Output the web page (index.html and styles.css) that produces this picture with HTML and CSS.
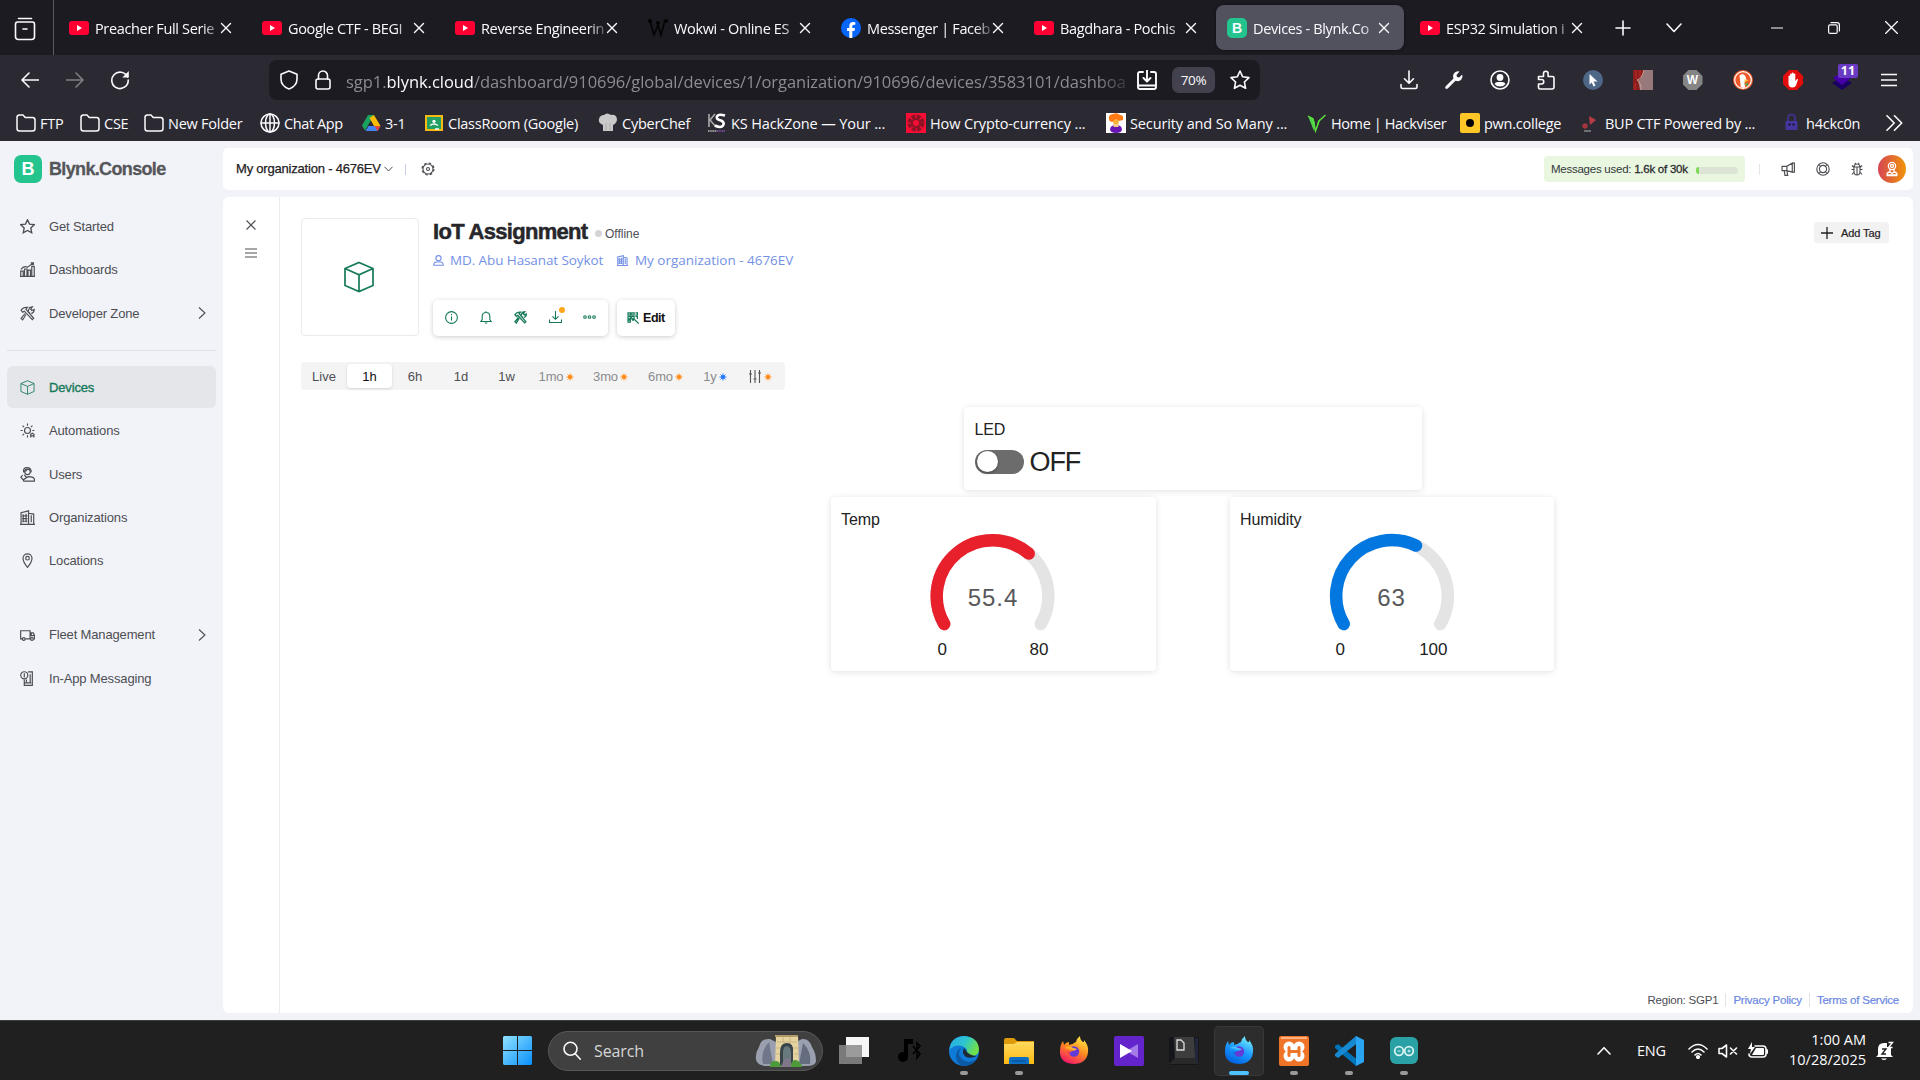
FILE: index.html
```html
<!DOCTYPE html>
<html lang="en">
<head>
<meta charset="utf-8">
<title>Devices - Blynk.Console</title>
<link rel="stylesheet" href="styles.css">
</head>
<body>
<svg class="defs" aria-hidden="true">
  <defs>
    <linearGradient id="gWin" x1="0" y1="0" x2="1" y2="1"><stop offset="0" stop-color="#8fe3ff"/><stop offset="1" stop-color="#0a8ffb"/></linearGradient>
    <linearGradient id="gEdge" x1="0" y1="0" x2="1" y2=".4"><stop offset="0" stop-color="#2aa8e8"/><stop offset=".55" stop-color="#2cc6d0"/><stop offset="1" stop-color="#6fe04b"/></linearGradient>
    <linearGradient id="gFox" x1=".8" y1="0" x2=".3" y2="1"><stop offset="0" stop-color="#fff04a"/><stop offset=".5" stop-color="#ff8a1e"/><stop offset="1" stop-color="#f5156c"/></linearGradient>
    <linearGradient id="gFoxDev" x1=".8" y1="0" x2=".3" y2="1"><stop offset="0" stop-color="#7df3ff"/><stop offset=".5" stop-color="#1e9dff"/><stop offset="1" stop-color="#0060df"/></linearGradient>
    <linearGradient id="gFolder" x1="0" y1="0" x2="0" y2="1"><stop offset="0" stop-color="#ffd95e"/><stop offset="1" stop-color="#fdb913"/></linearGradient>
    <linearGradient id="gAvatar" x1="0" y1="0" x2="1" y2="0"><stop offset="0" stop-color="#d64554"/><stop offset="1" stop-color="#f09408"/></linearGradient>
  </defs>
  <symbol id="youtube" viewBox="0 0 20 14"><rect width="20" height="14" rx="3" fill="#ff0033"/><path d="M8 4l5 3-5 3z" fill="#fff"/></symbol>
  <symbol id="x" viewBox="0 0 12 12"><path d="M1.500 1.500l9 9M10.500 1.500l-9 9"/></symbol>
  <symbol id="folder" viewBox="0 0 20 18"><path d="M1 3.500Q1 1 3.500 1H7l2.200 2.500H16.500Q19 3.500 19 6v8.500Q19 17 16.500 17h-13Q1 17 1 14.500z"/></symbol>
  <symbol id="cube" viewBox="0 0 30 32"><path d="M15 1.500L29 7.500V24.500L15 30.500L1 24.500V7.500zM1 7.500l14 6.200 14-6.200M15 13.700v16.800"/></symbol>
  <symbol id="building" viewBox="0 0 14 14"><path d="M1 13.300V2.500L8 .8v12.500M8 3l4.800.8v9.500M0 13.400h14M3 4v7.500M5.700 3.500v8M10.500 5v6.500M2 5.500h5M2 8h5M2 10.500h5"/></symbol>
  <symbol id="tools" viewBox="0 0 14 14"><path d="M1 4Q3 .8 7 1.200L5.500 3 12.800 11.500 11.500 12.800 4 4.800 2.500 5.800zM9.300 6.800L7.500 5 9 1.500 11.500.8 10 3l1 1.200 2.200-1Q13.500 6 10.500 7M5.500 8L2.500 13 1 11.600 4.700 7"/></symbol>
  <symbol id="star" viewBox="0 0 20 20"><path d="M10 1l2.700 5.800 6.300.8-4.600 4.400 1.200 6.300L10 15.200l-5.600 3.100 1.200-6.300L1 7.600l6.300-.8z"/></symbol>
  <symbol id="chev" viewBox="0 0 8 12"><path d="M1 .5L7 6l-6 5.500"/></symbol>
  <symbol id="dl" viewBox="0 0 18 20"><path d="M9 1v12M4.500 8.800L9 13.300l4.500-4.500M1 14.500V17q0 1.500 1.500 1.500h13Q17 18.500 17 17v-2.500"/></symbol>
  <symbol id="fox" viewBox="0 0 30 30"><path d="M1 15Q1 9 4 5l1 4Q7 6 10 6l0 3q2-1 4-1 0-1 3-2 1-4 4-6 0 4 3 6l1 0 0-2q5 6 4 12-1 11-13 12Q2 28 1 17z"/><circle cx="15" cy="15.500" r="5.200" fill="#633bd6"/><path d="M6 11q5-1 8 1l4 1q-2 2-5 2-2 1-3 3-3-3-4-7z"/></symbol>
  <symbol id="spark" viewBox="0 0 8 8"><circle cx="4" cy="4" r="2"/><path d="M4 .4v7.200M.4 4h7.200M1.500 1.500l5 5M6.500 1.500l-5 5" stroke="currentColor" stroke-width=".9"/></symbol>
</svg>

<div class="screen">
  <header class="tabstrip">
    <div class="firefox-view"><svg class="ln" width="22" height="24" viewBox="0 0 22 24"><path d="M4.500 1.500h13M3.500 5h15Q20.500 5 20.500 7.500v12q0 3-3 3h-13q-3 0-3-3v-12Q1.500 5 3.500 5zM9 12h4"/></svg></div>
    <nav class="tabs">
      <div class="tab"><svg class="fav yt"><use href="#youtube"/></svg><span>Preacher Full Serie</span><svg class="ln close"><use href="#x"/></svg></div>
      <div class="tab"><svg class="fav yt"><use href="#youtube"/></svg><span>Google CTF - BEGI</span><svg class="ln close"><use href="#x"/></svg></div>
      <div class="tab"><svg class="fav yt"><use href="#youtube"/></svg><span>Reverse Engineerin</span><svg class="ln close"><use href="#x"/></svg></div>
      <div class="tab"><svg class="fav" viewBox="0 0 20 20" fill="none" stroke="#050505" stroke-width="1.800"><path d="M2 3l4 14L10 7l3 10L17 2"/><circle cx="2" cy="3" r="1.200"/><circle cx="18" cy="3" r="1.200"/><circle cx="10" cy="5" r="1.200"/></svg><span>Wokwi - Online ES</span><svg class="ln close"><use href="#x"/></svg></div>
      <div class="tab"><svg class="fav" viewBox="0 0 20 20"><circle cx="10" cy="10" r="10" fill="#0866ff"/><path d="M8.300 20v-7H6v-3h2.300V8q0-4 4-4l2 .2v2.600h-1.400Q11.300 6.800 11.300 8.300V10H14l-.5 3h-2.200v7z" fill="#fff"/></svg><span>Messenger | Faceb</span><svg class="ln close"><use href="#x"/></svg></div>
      <div class="tab"><svg class="fav yt"><use href="#youtube"/></svg><span>Bagdhara - Pochis</span><svg class="ln close"><use href="#x"/></svg></div>
      <div class="tab active"><b class="fav bl">B</b><span>Devices - Blynk.Co</span><svg class="ln close"><use href="#x"/></svg></div>
      <div class="tab"><svg class="fav yt"><use href="#youtube"/></svg><span>ESP32 Simulation i</span><svg class="ln close"><use href="#x"/></svg></div>
    </nav>
    <div class="strip-buttons">
      <svg class="ln" viewBox="0 0 16 16" width="16" height="16"><path d="M8 1v14M1 8h14"/></svg>
      <svg class="ln" viewBox="0 0 16 10" width="16" height="10"><path d="M1 1l7 7.500L15 1"/></svg>
    </div>
    <div class="window-buttons">
      <svg class="ln" viewBox="0 0 12 12" width="12" height="12"><path d="M0 6h12"/></svg>
      <svg class="ln" viewBox="0 0 12 12" width="12" height="12"><rect x=".6" y="2.800" width="8.600" height="8.600" rx="1.500"/><path d="M3 .7h6Q11.400.7 11.400 3v6"/></svg>
      <svg class="ln" viewBox="0 0 12 12" width="13" height="13"><path d="M.5.5l11 11M11.500.5l-11 11"/></svg>
    </div>
  </header>

  <div class="navbar">
    <div class="nav-buttons">
      <svg class="ln" viewBox="0 0 18 16" width="18" height="16"><path d="M17.500 8H1.200M8 1L1 8l7 7"/></svg>
      <svg class="ln dim" viewBox="0 0 18 16" width="18" height="16"><path d="M.5 8h16.300M10 1l7 7-7 7"/></svg>
      <svg class="ln" viewBox="0 0 20 20" width="20" height="20"><path d="M17.500 7A8.200 8.200 0 1 0 18.200 10"/><path d="M18.800 1v6.500h-6.500z" fill="#fbfbfe" stroke="none"/></svg>
    </div>
    <div class="urlbar">
      <svg class="ln shield" viewBox="0 0 18 20" width="18" height="20"><path d="M9 1l8 3.200V9q0 7-8 10Q1 16 1 9V4.200z"/></svg>
      <svg class="ln lock" viewBox="0 0 16 20" width="16" height="20"><rect x="1" y="9" width="14" height="10" rx="2"/><path d="M3.500 9V5.500a4.500 4.500 0 0 1 9 0V9"/></svg>
      <div class="url">sgp1.<em>blynk.cloud</em>/dashboard/910696/global/devices/1/organization/910696/devices/3583101/dashboa</div>
      <svg class="ln" viewBox="0 0 20 20" width="20" height="20"><path d="M6 2H3Q1 2 1 4v13q0 2 2 2h14q2 0 2-2V4q0-2-2-2h-3M1 15.500h18M10 0v11M6.500 8L10 11.500 13.500 8" stroke-width="1.900"/></svg>
      <span class="zoom">70%</span>
      <svg class="ln" width="20" height="20"><use href="#star"/></svg>
    </div>
    <div class="extensions">
      <svg class="ln" width="18" height="20"><use href="#dl"/></svg>
      <svg viewBox="0 0 20 20" width="20" height="20" fill="#fbfbfe"><path d="M1.500 16.500l8-8Q8 4 11.500 2q2-1.200 4-.5L12.500 5l.5 2 2.200.5 3-3q1 3-1 5.200Q15 12 11.500 10.700l-8 8q-3.200.5-2-2.200z"/></svg>
      <svg class="ln" viewBox="0 0 20 20" width="20" height="20"><circle cx="10" cy="10" r="9"/><circle cx="10" cy="7.500" r="3.400" fill="#fbfbfe" stroke="none"/><path d="M4.500 14q1-2 3-2h5q2 0 3 2-2 2.600-5.500 2.600T4.500 14z" fill="#fbfbfe" stroke="none"/></svg>
      <svg class="ln" viewBox="0 0 18 20" width="18" height="20"><path d="M1.500 6.500h5V3.500a2.300 2.300 0 0 1 4.600 0v3h4.400q1.500 0 1.500 1.500v9q0 2-2 2H3q-1.500 0-1.500-2v-3h3a2.200 2.200 0 0 0 0-4.500h-3z"/></svg>
      <svg viewBox="0 0 20 20" width="20" height="20"><circle cx="10" cy="10" r="10" fill="#4f6787"/><path d="M6.500 4l8 7.500h-4l2 4-2 .9-1.700-4-2.300 2z" fill="#fff"/></svg>
      <svg viewBox="0 0 20 20" width="20" height="20"><path fill="#97797b" d="M0 0h20v20H0z"/><path d="M0 0h11Q9 8 5 11l2 9H0z" fill="#8b1d1d"/><path d="M3 0v9M7 0v7M2 13v7" stroke="#b32626" stroke-width="1.500"/><path d="M4 10q4 2 4 10M11 0Q9 9 4 10" stroke="#c9a093" fill="none"/></svg>
      <b class="ext octagon grey">W</b>
      <svg viewBox="0 0 20 20" width="20" height="20"><circle cx="10" cy="10" r="10" fill="#ee5a2b"/><circle cx="10" cy="10" r="8.300" fill="none" stroke="#fff" stroke-width="1.200"/><path d="M6.500 5.500q4-3.500 6 1l1 3.500-2 2 .5 5.500Q9 18 7.800 17z" fill="#fff"/><path d="M11 9.500l5 .5-4 2z" fill="#fdc63a"/><path d="M11 14l4-1v3z" fill="#3db44a"/></svg>
      <svg viewBox="0 0 20 20" width="20" height="20"><path d="M6 0h8l6 6v8l-6 6H6l-6-6V6z" fill="#e40d0d"/><path d="M5.500 11V6q.8-1 1.600 0V4q.8-1 1.700 0V3q.9-1 1.800 0v1q.9-1 1.700 0v7l1.700-2q1.200-.4 1 .6L13 15.500q-1 2-3.500 2-4 0-4-4z" fill="#fff"/></svg>
      <div class="ublock"><svg viewBox="0 0 20 20" width="20" height="20"><path d="M10 7l10 6-10 7-10-7z" fill="#1b0064"/><path d="M10 2l9 6-9 7-9-7z" fill="#4500a8"/></svg><b class="count">11</b></div>
      <svg class="ln" viewBox="0 0 16 14" width="16" height="14"><path d="M.5 1.500h15M.5 7h15M.5 12.500h15"/></svg>
    </div>
  </div>

  <div class="bookmarks">
    <a><svg class="ln"><use href="#folder"/></svg>FTP</a>
    <a><svg class="ln"><use href="#folder"/></svg>CSE</a>
    <a><svg class="ln"><use href="#folder"/></svg>New Folder</a>
    <a><svg class="ln" viewBox="0 0 20 20"><circle cx="10" cy="10" r="9"/><ellipse cx="10" cy="10" rx="4.500" ry="9"/><path d="M1 10h18M10 1v18"/></svg>Chat App</a>
    <a><svg viewBox="0 0 20 18"><path d="M7 1h6l-3.500 6L4 16.500 1 11.500z" fill="#1aa260"/><path d="M13 1l6.500 11H13L8.500 4z" fill="#fbbc05"/><path d="M4.500 17l3-5h12l-3 5z" fill="#4285f4"/><path d="M13.500 12h6l-3 5z" fill="#ea4335"/></svg>3-1</a>
    <a><svg viewBox="0 0 20 18"><path fill="#f5ba14" d="M1 1h18v16H1z"/><path fill="#23a164" d="M3 3h14v12H3z"/><circle cx="10" cy="7.300" r="1.600" fill="#fff"/><path d="M6 11.500q4-3 8 0M11 15h4" stroke="#fff" stroke-width="1.300" fill="none"/></svg>ClassRoom (Google)</a>
    <a><svg viewBox="0 0 20 20"><path d="M5 18v-6Q0 10 1 6q1-4 5-4 3-3 7 0 5-1 6 4 0 4-4 6v6z" fill="#c9c9c9"/><path d="M8 10v7M12 10v7" stroke="#aaa"/></svg>CyberChef</a>
    <a><svg viewBox="0 0 20 20"><path d="M2 1v13M8 1L3 7l6 7" stroke="#aaa" stroke-width="1.600" fill="none"/><path d="M18 2.500q-7-2-8 1t4 4q4 2 2 5t-8 0" stroke="#fff" stroke-width="2.600" fill="none"/><path d="M1 18h9" stroke="#999" stroke-width="2" stroke-dasharray="1.500 .7"/><path d="M10 18h8" stroke="#6e4a8e" stroke-width="2" stroke-dasharray="1.500 .7"/></svg>KS HackZone — Your ...</a>
    <a><svg viewBox="0 0 20 20"><path fill="#f80d35" d="M0 0h20v20H0z"/><circle cx="10" cy="10" r="6.500" fill="none" stroke="#8b1424" stroke-width="4" stroke-dasharray="3.800 1.300"/><circle cx="10" cy="10" r="4" fill="none" stroke="#8b1424" stroke-width="2"/></svg>How Crypto-currency ...</a>
    <a><svg viewBox="0 0 20 20"><path fill="#fff" d="M0 0h20v20H0z"/><path d="M4 17q0-5 6-5t6 5q-1 3-6 3t-6-3z" fill="#6a16b5"/><path d="M7.500 6h5v8h-5z" fill="#f9ca8a"/><path d="M3 6q-1-4 4-5 4-2 7 1 4 0 3 5l-4 1-3-2-3 3q-4 0-4-3z" fill="#ff7a12"/><path d="M7.500 7h5v4h-5z" fill="#f9b13b"/></svg>Security and So Many ...</a>
    <a><svg viewBox="0 0 20 18"><path d="M1 2l5 2 2 5-1 8zM19 1l-6 5-4 11 2-10z" fill="#4bd64b"/><path d="M1 2l5 3 2.500 12L12 7l6.500-6" stroke="#5de03c" stroke-width="1.400" fill="none"/></svg>Home | Hackviser</a>
    <a><svg viewBox="0 0 20 20"><rect width="20" height="20" rx="2" fill="#ffc627"/><circle cx="10" cy="10" r="4" fill="#000"/></svg>pwn.college</a>
    <a><svg viewBox="0 0 20 20"><path d="M8 3l7 4-6 5z" fill="#b93b45"/><circle cx="4" cy="13" r="2.700" fill="#a5343d"/><path d="M3 18h7" stroke="#888" stroke-width="1.500"/></svg>BUP CTF Powered by ...</a>
    <a><svg viewBox="0 0 20 20"><path d="M6 9V5q0-3.500 3.500-3.500T13 5v4" stroke="#3f3393" stroke-width="1.700" fill="none"/><rect x="3.500" y="8" width="12" height="9" rx="1" fill="#44369e"/><path d="M6.500 11.500h2M10.500 11.500h2" stroke="#15122e" stroke-width="2"/></svg>h4ckc0n</a>
    <svg class="ln more" viewBox="0 0 17 16"><path d="M1 .8L8.200 8 1 15.200M8.500.8L15.700 8l-7.200 7.200"/></svg>
  </div>

  <div class="page">
    <aside class="sidebar">
      <div class="brand"><b class="logo">B</b><strong>Blynk.Console</strong></div>
      <nav class="menu">
        <a><svg class="ic"><use href="#star"/></svg>Get Started</a>
        <a><svg class="ic" viewBox="0 0 14 14"><path d="M.7 13.300V8.500H3v4.800M4.200 13.300V6.500h2.300v6.800M7.500 13.300V7.500h2.300v5.800M11 13.300V4h2.300v9.300M0 13.400h14M.8 7q3-4 6-2l5.500-4M10 .8h2.500v2"/></svg>Dashboards</a>
        <a><svg class="ic"><use href="#tools"/></svg>Developer Zone<svg class="ic arrow"><use href="#chev"/></svg></a>
      </nav>
      <nav class="menu main-menu">
        <a class="selected"><svg class="ic"><use href="#cube"/></svg>Devices</a>
        <a><svg class="ic" viewBox="0 0 14 14"><circle cx="7" cy="7" r="2.800"/><path d="M7 .5v2M7 11.500v2M.5 7h2M11.500 7h2M2.400 2.400l1.400 1.400M11.600 2.400l-1.400 1.400M2.400 11.600l1.400-1.400M10 13.500v-3l1.500-1 1.500 1v3M10 12h3"/></svg>Automations</a>
        <a><svg class="ic" viewBox="0 0 14 14"><circle cx="7" cy="4.500" r="2.600"/><path d="M3.500 5Q2.500.6 6.500.6t4 4.400M4 4q2 0 3-2M2.500 7.500l-1.700 2L3 12l3-2 2-1q5.500 0 5.500 3.200v1H3.500L3 12M4 7.500L6.500 10"/></svg>Users</a>
        <a><svg class="ic"><use href="#building"/></svg>Organizations</a>
        <a><svg class="ic" viewBox="0 0 14 14"><path d="M7 13.500Q2.800 8.500 2.800 5a4.200 4.200 0 0 1 8.400 0q0 3.500-4.200 8.500z"/><circle cx="7" cy="4.800" r="1.700"/></svg>Locations</a>
      </nav>
      <nav class="menu">
        <a><svg class="ic" viewBox="0 0 14 14"><path d="M2 11H.6V3.500h8.800V11H5M9.400 5.500h3l1.200 2.500v3h-1M9.400 11h.5M10.500 6v2h3"/><circle cx="3.500" cy="11.200" r="1.300"/><circle cx="11.200" cy="11.200" r="1.300"/></svg>Fleet Management<svg class="ic arrow"><use href="#chev"/></svg></a>
        <a><svg class="ic" viewBox="0 0 14 14"><path d="M4 8v5.400h7.500V.8H7.500M9.500 11V3M4.500 11h6"/><circle cx="4" cy="4" r="3.300"/><path d="M4 2v4M6 8v2.500"/></svg>In-App Messaging</a>
      </nav>
    </aside>

    <div class="workspace">
      <div class="topbar">
        <span class="org">My organization - 4676EV</span>
        <svg class="ic" viewBox="0 0 10 6" width="9" height="6"><path d="M.5.5L5 5.200 9.500.5"/></svg>
        <i class="sep blue"></i>
        <svg class="ic gear" viewBox="0 0 14 14" width="14" height="14"><circle cx="7" cy="7" r="5.900" stroke-dasharray="2.500 2.130" stroke-width="1.300"/><circle cx="7" cy="7" r="5"/><circle cx="7" cy="7" r="1.500"/></svg>
        <div class="usage"><span>Messages used: <b>1.6k of 30k</b></span><i class="meter"><i></i></i></div>
        <i class="sep"></i>
        <svg class="ic" viewBox="0 0 14 14" width="15" height="15"><path d="M10.500 1v8.500L5.500 8H1V4h4.500zM10.500 1h2v8.500h-2M5.500 4v4M3 8l.7 4.500h2.600L5.500 8"/></svg>
        <svg class="ic" viewBox="0 0 14 14" width="14" height="14"><circle cx="7" cy="7" r="6.200"/><circle cx="7" cy="7" r="3.600"/><path d="M3 2.500l2 2.300M11 2.500L9 4.800M3 11.500l2-2.300M11 11.500L9 9.200"/></svg>
        <svg class="ic bug" viewBox="0 0 14 14" width="14" height="14"><path d="M4 5q0-3 3-3t3 3v4.500Q10 13 7 13t-3-3.500zM4 5h6M7 5v8M4 7.500H1.500M10 7.500h2.500M4 5.500L2 3.500M10 5.500l2-2M4 10l-2 2.500M10 10l2 2.500M5.500 2L5 .7M8.500 2L9 .7"/></svg>
        <svg class="avatar" viewBox="0 0 28 28" width="28" height="28"><circle cx="14" cy="14" r="14" fill="url(#gAvatar)"/><g fill="none" stroke="#fff" stroke-width="1.300"><circle cx="14" cy="11" r="3.600"/><circle cx="14" cy="11" r="1.500"/><path d="M12 14v3M16 14v3M9 20q0-3 3-3l2 1.500 2-1.500q3 0 3 3zM9 20.500h10"/></g></svg>
      </div>

      <main class="panel">
        <div class="rail">
          <svg class="ic" width="12" height="12"><use href="#x"/></svg>
          <svg class="ic" viewBox="0 0 12 10" width="12" height="10"><path d="M0 1h12M0 5h12M0 9h12"/></svg>
        </div>
        <div class="device">
          <div class="device-head">
            <div class="thumb"><svg class="ic"><use href="#cube"/></svg></div>
            <div class="info">
              <div class="title"><h1>IoT Assignment</h1><i class="dot"></i><span>Offline</span></div>
              <div class="owners">
                <svg class="ic" viewBox="0 0 11 11" width="11" height="11"><circle cx="5.500" cy="3.200" r="2.600"/><path d="M.7 10.300Q.7 7 3.500 7h4q2.800 0 2.800 3.300z"/></svg><span class="owner">MD. Abu Hasanat Soykot</span>
                <svg class="ic office" width="11" height="11"><use href="#building"/></svg><span class="org-link">My organization - 4676EV</span>
              </div>
              <div class="actions">
                <div class="btns">
                  <span><svg class="ic" viewBox="0 0 13 13" width="13" height="13"><circle cx="6.500" cy="6.500" r="5.900"/><path d="M6.500 5.500v4M6.500 3v1.200"/></svg></span>
                  <span><svg class="ic" viewBox="0 0 12 13" width="12" height="13"><path d="M.8 10.500h10.400L9.800 8.500V5.500Q9.800 1.500 6 1.500T2.200 5.500v3zM4.700 12h2.600M6 .3v1"/></svg></span>
                  <span><svg class="ic heavy" width="13" height="13"><use href="#tools"/></svg></span>
                  <span class="badge"><svg class="ic" viewBox="0 0 13 12" width="13" height="12"><path d="M6.500 0v8M3.500 5.300l3 3 3-3M.5 8.500v3h12v-3"/></svg></span>
                  <span><svg class="ic" viewBox="0 0 13 4" width="13" height="4"><circle cx="2" cy="2" r="1.300"/><circle cx="6.500" cy="2" r="1.300"/><circle cx="11" cy="2" r="1.300"/></svg></span>
                </div>
                <div class="edit"><svg class="ic" viewBox="0 0 12 12" width="12" height="12"><path d="M1 .8h2.400v2.400H1zM4.700.8h2.400v2.400H4.700zM8.400.8h2v2.400h-2M1 4.500h2.400v2.400H1zM4.700 4.500h2.400v2.400H4.700zM1 8.200h2.400v2H1zM5 8.200h2M8.400 4.500h2v2.500M7 7l4.700 4.500" stroke-width="1.200"/></svg>Edit</div>
              </div>
            </div>
            <div class="addtag"><svg class="ic" viewBox="0 0 12 12" width="12" height="12"><path d="M6 0v12M0 6h12"/></svg>Add Tag</div>
          </div>
          <div class="ranges">
            <span>Live</span><span class="on">1h</span><span>6h</span><span>1d</span><span>1w</span>
            <span class="pro">1mo<svg><use href="#spark"/></svg></span><span class="pro">3mo<svg><use href="#spark"/></svg></span><span class="pro">6mo<svg><use href="#spark"/></svg></span><span class="pro plus">1y<svg><use href="#spark"/></svg></span>
            <span class="pro custom"><svg class="ic sliders" viewBox="0 0 12 13"><path d="M1.500 0v13M6 0v13M10.500 0v13M0 4h3M4.500 9h3M9 3h3" stroke="#555"/></svg><svg><use href="#spark"/></svg></span>
          </div>
          <div class="widgets">
            <section class="card led"><h2>LED</h2><div class="toggle"><i class="switch"></i><span>OFF</span></div></section>
            <section class="card"><h2>Temp</h2>
              <div class="gauge"><svg viewBox="0 0 126 102"><path class="track" d="M14.200 91A55.800 55.800 0 1 1 110.800 91"/><path class="temp" d="M14.200 91A55.800 55.800 0 0 1 98.700 20.600"/></svg><strong>55.4</strong><div class="limits"><span>0</span><span>80</span></div></div></section>
            <section class="card"><h2>Humidity</h2>
              <div class="gauge"><svg viewBox="0 0 126 102"><path class="track" d="M14.700 91A55.800 55.800 0 1 1 111.300 91"/><path class="hum" d="M14.700 91A55.800 55.800 0 0 1 87 12.600"/></svg><strong>63</strong><div class="limits wide"><span>0</span><span>100</span></div></div></section>
          </div>
          <footer class="legal"><span>Region: SGP1</span><a>Privacy Policy</a><a>Terms of Service</a></footer>
        </div>
      </main>
    </div>
  </div>

  <div class="taskbar">
    <svg class="start" viewBox="0 0 29 29" width="29" height="29" fill="url(#gWin)"><path d="M1 0h13v14H0V1zM15 0h13l1 1v13H15zM0 15h14v14H1l-1-1zM15 15h14v13l-1 1H15z"/></svg>
    <div class="search">
      <svg class="ln" viewBox="0 0 18 19" width="18" height="19"><circle cx="7.500" cy="7.800" r="6.500"/><path d="M12.500 13l4.800 5.200"/></svg><span>Search</span>
      <svg class="art" viewBox="0 0 62 34" width="62" height="34"><path d="M1 26Q0 19 4 13 6 4 15 5l6 3v24H12Q3 32 1 26z" fill="#9aa0af"/><path d="M8 30Q5 18 14 8l4 22z" fill="#71778a"/><path d="M61 27Q61 19 57 13 54 4 47 5l-6 3v24h10q10 0 10-5z" fill="#9aa0af"/><path d="M55 30Q57 18 48 9l-4 21z" fill="#646c7e"/><path d="M21 2h22l1 31H20z" fill="#e5d3a0"/><path d="M20 1h23v2H20z" fill="#b09a66"/><path d="M22 8h20M21 14h4M38 14h5M21 20h4M39 20h4M28 3v5M35 3v5" stroke="#c4ae78" stroke-width=".8"/><path d="M25 32V18q0-9 7-9t6 9v14z" fill="#39444b"/><path d="M28 32V19q0-7 4-7 4 1 4 7v13z" fill="#697a7c"/><path d="M26 33q3-10 8-9l4 9z" fill="#807789"/><path d="M15 33q0-7 5-6 5-1 6 6zM36 33q0-8 5-7 3 1 4 3 2 1 2 4z" fill="#4d9a3b"/></svg>
    </div>
    <div class="apps">
      <div><svg viewBox="0 0 30 30"><path d="M7 1h23v20H7z" fill="#f6f6f6"/><path d="M0 9h23v19H0z" fill="#8b8b8b" opacity=".85"/></svg></div>
      <div><svg viewBox="0 0 30 30" fill="#000"><circle cx="9" cy="21" r="5"/><path d="M10 21V3h9v5h-5v13z"/><path d="M19 10l7 8-3 4V7l3 3-7 8" fill="none" stroke="#000" stroke-width="1.600"/></svg></div>
      <div class="open"><svg viewBox="0 0 30 30"><circle cx="15" cy="15" r="15" fill="#0f7ad8"/><path d="M.5 14Q1 1 15 0q14 1 15 13 0 7-7 7-6 0-5-4 1-4-5-6Q5 8 .5 14z" fill="url(#gEdge)"/><path d="M12 12q-5 7 2 12 6 4 14-1-5 7-13 7Q8 29 7 21q0-7 5-9z" fill="#0c59a4"/><path d="M15 12q-3 5 2 9 5 2 11-1-6 0-10-4z" fill="#202a35"/></svg></div>
      <div class="open"><svg viewBox="0 0 30 30"><path d="M0 4q0-2 2-2h8l3 3h17v8H0z" fill="#dd9b0b"/><path d="M0 8h10l3-2h17v22H0z" fill="url(#gFolder)"/><path d="M5 28v-5q0-2 2-2h16q2 0 2 2v5z" fill="#0c6fc4"/><path d="M8 25h14" stroke="#074b8b"/></svg></div>
      <div><svg viewBox="0 0 30 30" fill="url(#gFox)"><use href="#fox"/></svg></div>
      <div><svg viewBox="0 0 30 30"><rect width="30" height="30" rx="2" fill="#6424cc"/><path d="M24 8v14L12 15z" fill="#a47be8"/><path d="M6 8l12 7-12 7z" fill="#fff"/></svg></div>
      <div><svg viewBox="0 0 30 30"><rect y="1" width="30" height="28" rx="2" fill="#15161c"/><path d="M5 1h20l1 21H6z" fill="#3d3d3e"/><path d="M0 28L6 22h20l4 6z" fill="#29292a"/><path d="M26 2h3v26l-3-6z" fill="#22263a"/><path d="M8 4h4l3 3v7H8z" fill="none" stroke="#ddd" stroke-width="1.300"/></svg></div>
      <div class="open current"><svg viewBox="0 0 30 30" fill="url(#gFoxDev)"><use href="#fox"/></svg></div>
      <div class="open"><svg viewBox="0 0 30 30"><rect width="30" height="30" rx="2" fill="#f07427"/><path d="M2 1h26v2H2z" fill="#fbb283"/><g fill="#fff"><circle cx="10" cy="11" r="5.500"/><circle cx="20" cy="11" r="5.500"/><circle cx="10" cy="20" r="5.500"/><circle cx="20" cy="20" r="5.500"/><path d="M8 11h14v9H8z"/></g><path d="M10 11.500v8M20 11.500v8M10 15.500h10" stroke="#f07427" stroke-width="3" stroke-linecap="round"/></svg></div>
      <div class="open"><svg viewBox="0 0 30 30"><path d="M1 10l3-2 21 17-3 5L1 12z" fill="#0072b8"/><path d="M1 20l3 2L25 6l-3-6L1 18z" fill="#1689d1"/><path d="M22 0l8 4v22l-8 4z" fill="#2aa5f2"/></svg></div>
      <div class="open"><svg viewBox="0 0 30 30"><rect x="1" y="1" width="28" height="27" rx="6" fill="#2aa1a5"/><g fill="none" stroke="#d8f1f1" stroke-width="1.800"><circle cx="10" cy="15" r="4.300"/><circle cx="20" cy="15" r="4.300"/><path d="M8.500 15h3M18.500 15h3M20 13.500v3" stroke-width="1"/></g></svg></div>
    </div>
    <div class="tray">
      <svg class="ln" viewBox="0 0 14 9" width="14" height="9"><path d="M1 8l6-6.300L13 8"/></svg>
      <span class="lang">ENG</span>
      <svg class="ln" viewBox="0 0 20 16" width="20" height="16"><path d="M1 6q9-9 18 0M4 9q6-6 12 0M7 12q3-3 6 0"/><circle cx="10" cy="14" r="1.300" fill="#fff"/></svg>
      <svg class="ln" viewBox="0 0 20 14" width="20" height="14"><path d="M1 4.500h3L8.500 1v12L4 9.500H1zM12.500 4l6 6M18.500 4l-6 6"/></svg>
      <svg class="ln" viewBox="0 0 20 17" width="20" height="17"><path d="M7 4h8q3 0 3 3v5q0 3-3 3H4q-3 0-3-3M19.300 8v3"/><path d="M8 6h7q1 0 1 1v5q0 1-1 1H4z" fill="#fff" stroke="none"/><path d="M4 0L0 7h3l-1 5 5-7H4z" fill="#fff" stroke="none"/></svg>
      <div class="clock"><span>1:00 AM</span><span>10/28/2025</span></div>
      <svg viewBox="0 0 18 20" width="18" height="20" fill="#fff"><path d="M0 16l2-2V8q0-6 6-6l3 0 0 4h4v8l2 2zM5 17.500h6q-3 3-6 0z"/><path d="M6 8h4l-4 5h4" stroke="#202020" stroke-width="1.400" fill="none"/><path d="M12.500 1.500h4l-4 5h4" stroke="#fff" stroke-width="1.400" fill="none"/></svg>
    </div>
  </div>
</div>
</body>
</html>
```
FILE: styles.css
```css
* { box-sizing: border-box; }
body { margin: 0; background: #202020; }
.defs { position: absolute; display: block; width: 0; height: 0; overflow: hidden; }
svg { flex: none; display: block; }
.ln { fill: none; stroke: #fbfbfe; stroke-width: 1.6; stroke-linecap: round; stroke-linejoin: round; }
.ic { fill: none; stroke: currentColor; stroke-width: 1.1; }
.screen { width: 1920px; height: 1080px; overflow: hidden; display: flex; flex-direction: column; font-family: "Open Sans", "Noto Sans", sans-serif; color: #fbfbfe; }

/* tab strip */
.tabstrip { height: 55px; flex: none; display: flex; background: #1c1b22; }
.firefox-view { width: 54px; border-right: 1px solid #5b5a62; display: flex; align-items: center; padding: 12px 0 9px 14px; }
.tabs { display: grid; grid-template-columns: repeat(8, 188px); column-gap: 5px; padding: 5px 0 5px 4px; }
.tab { display: flex; align-items: center; padding: 0 13px 0 11px; border-radius: 8px; font-size: 14.5px; letter-spacing: -.35px; }
.tab.active { background: #52515e; box-shadow: 0 0 3px #0008; }
.fav { width: 20px; height: 20px; }
.fav.yt { height: 14px; }
.fav.bl { border-radius: 5px; background: #24c48e; text-align: center; font: bold 14px/20px "Liberation Sans", sans-serif; }
.tab span { width: 125px; margin-left: 6px; padding-top: 1px; white-space: nowrap; -webkit-mask-image: linear-gradient(90deg, #000 86%, #0003 100%); mask-image: linear-gradient(90deg, #000 86%, #0003 100%); }
.close { width: 12px; height: 12px; stroke-width: 1.4; }
.strip-buttons { display: flex; align-items: center; gap: 35px; margin-left: 18px; }
.window-buttons { display: flex; align-items: center; gap: 45px; margin: 0 22px 0 auto; }
.window-buttons .ln { stroke-width: 1.2; }

/* navigation bar */
.navbar { height: 50px; flex: none; background: #2b2a33; display: flex; align-items: center; }
.nav-buttons { width: 269px; display: flex; align-items: center; gap: 27px; padding-left: 21px; }
.nav-buttons .ln:last-child { margin-left: -1px; }
.dim { opacity: .4; }
.urlbar { width: 991px; height: 40px; border-radius: 8px; background: #1c1b22; display: flex; align-items: center; padding-left: 11px; }
.lock { margin: 0 14px 0 17px; }
.url { width: 782px; margin-right: 9px; margin-left: 1px; padding-top: 3px; white-space: nowrap; font-size: 16.5px; color: #8c8b92; letter-spacing: -.04px; -webkit-mask-image: linear-gradient(90deg, #000 96%, #0003); mask-image: linear-gradient(90deg, #000 96%, #0003); }
.url em { font-style: normal; color: #fbfbfe; }
.zoom { width: 43px; height: 26px; margin: 0 15px; border-radius: 7px; background: #42414d; font-size: 13.5px; line-height: 27px; text-align: center; letter-spacing: -.3px; }
.extensions { display: grid; grid-template-columns: 45.5px 45.5px 45.5px 46.5px 48.5px 50px 50px 50px 50px 49px 45px; justify-items: center; align-items: center; margin-left: 126px; }
.octagon { width: 20px; height: 20px; background: #858585; clip-path: polygon(30% 0, 70% 0, 100% 30%, 100% 70%, 70% 100%, 30% 100%, 0 70%, 0 30%); text-align: center; font: bold 12px/20px "Liberation Sans", sans-serif; }
.ublock { position: relative; }
.count { position: absolute; left: 6px; top: -6px; width: 20px; height: 14px; border-radius: 2px; background: #6a3ac4; font: bold 12.5px/13px "Open Sans", sans-serif; text-align: center; }

/* bookmarks */
.bookmarks { height: 36px; flex: none; background: #2b2a33; display: grid; grid-template-columns: 64px 64px 116px 101px 63px 174px 109px 199px 200px 201px 153px 121px 201px 104px 17px; align-items: center; padding-left: 16px; font-size: 14.5px; letter-spacing: -.25px; }
.bookmarks a { display: flex; align-items: center; gap: 4px; white-space: nowrap; }
.bookmarks a:nth-child(4) { letter-spacing: -.4px; }
.bookmarks a:nth-child(8), .bookmarks a:nth-child(9), .bookmarks a:nth-child(10) { letter-spacing: -.12px; }
.bookmarks a:nth-child(11) { letter-spacing: -.4px; }
.bookmarks a svg { width: 20px; height: 20px; }
.bookmarks a .ln { stroke-width: 1.5; }
.more { width: 17px; height: 16px; }

/* console page */
.page { height: 879px; flex: none; background: #f2f3f8; display: flex; font-family: "Liberation Sans", Arial, sans-serif; font-size: 13px; color: #4d4e53; }
.sidebar { width: 223px; padding: 14px 7px 0; }
.brand { display: flex; align-items: center; gap: 7px; height: 28px; margin: 0 0 22px 7px; font-size: 18px; letter-spacing: -.65px; color: #55565a; }
.brand strong { -webkit-text-stroke: .3px #55565a; }
.logo { width: 28px; height: 28px; border-radius: 7px; background: #24c48e; color: #fff; text-align: center; line-height: 28px; letter-spacing: 0; }
.menu { display: flex; flex-direction: column; gap: 1.4px; }
.menu a { display: flex; align-items: center; height: 42px; padding: 1px 10px 0 13px; border-radius: 6px; letter-spacing: -.15px; }
.menu a .ic:first-child { width: 15px; height: 15px; margin-right: 14px; }
.menu a .ic:first-child:has(use[href="#star"]), .menu a .ic:first-child:has(use[href="#cube"]) { stroke-width: 1.8; }
.menu .ic.arrow { width: 8px; height: 12px; margin-left: auto; }
.main-menu { border-top: 1px solid #e0e1e5; margin: 16px 0 32px; padding-top: 15px; }
.menu a.selected { background: #e4e6ea; color: #15795a; -webkit-text-stroke: .35px #15795a; }
.workspace { width: 1690px; padding: 7px 0; display: flex; flex-direction: column; gap: 7px; }
.topbar { height: 42px; flex: none; background: #fff; border-radius: 5px; display: flex; align-items: center; padding: 0 7px 0 13px; }
.org { width: 148px; padding-bottom: 1px; white-space: nowrap; color: #1f2023; letter-spacing: -.2px; font-size: 13px; -webkit-text-stroke: .25px #1f2023; }
.sep { width: 1px; height: 11px; background: #e3e4e8; margin: 0 21px 0 14px; }
.sep.blue { background: #c5cee6; margin: 0 15px 0 12px; }
.usage { margin-left: auto; width: 201px; height: 26px; background: #e9f6e0; border-radius: 4px; display: flex; align-items: center; padding-left: 7px; font-size: 11.5px; letter-spacing: -.25px; color: #33363a; }
.usage span { width: 145px; padding-bottom: 1px; white-space: nowrap; }
.usage b { font-weight: normal; -webkit-text-stroke: .3px #1f2023; }
.meter { width: 42px; height: 7px; margin-top: 3px; border-radius: 3px; background: #dce5d5; overflow: hidden; }
.meter i { display: block; width: 3px; height: 7px; background: #7ed957; }
.topbar .sep ~ .sep ~ svg { margin-right: 20px; }
.topbar .sep ~ .sep ~ svg.bug { margin-right: 14px; }
.topbar .sep ~ .sep ~ svg.avatar { margin: 0; }
.panel { flex: 1; background: #fff; border-radius: 6px; display: flex; }
.rail { width: 57px; border-right: 1px solid #ececee; display: flex; flex-direction: column; align-items: center; gap: 17px; padding-top: 22px; padding-right: 1px; }
.device { flex: 1; display: flex; flex-direction: column; padding: 21px 13px 6px 21px; }
.device-head { display: flex; }
.thumb { width: 118px; height: 118px; border: 1px solid #ebebed; border-radius: 4px; display: grid; place-items: center; padding-right: 2px; color: #15795a; }
.thumb svg { width: 32px; height: 32px; stroke-width: 1.7; }
.info { padding-left: 14px; }
.title { height: 27px; display: flex; align-items: center; }
.title h1 { margin: 0; font-size: 22px; letter-spacing: -.7px; color: #26262b; white-space: nowrap; width: 162px; -webkit-text-stroke: .5px #26262b; }
.title span { margin-top: 4px; font-size: 12px; letter-spacing: 0; }
.dot { width: 7px; height: 7px; border-radius: 50%; background: #d5d5d8; margin: 4px 3px 0 0; }
.owners { display: flex; align-items: center; height: 30px; font: 13.5px "Open Sans", sans-serif; letter-spacing: -.1px; color: #7591e6; white-space: nowrap; }
.owners .owner { width: 167px; margin-left: 6px; }
.owners .org-link { margin-left: 7px; letter-spacing: -.02px; }
.office { stroke-width: 1.4; }
.actions { display: flex; gap: 9px; margin-top: 25px; color: #15795a; }
.btns, .edit { height: 36px; border-radius: 5px; background: #fff; box-shadow: 0 1px 5px #0003; display: flex; align-items: center; }
.btns { width: 175px; padding: 0 1px 2px; display: grid; grid-template-columns: repeat(5, 1fr); justify-items: center; }
.heavy { stroke-width: 1.4; }
.badge { position: relative; }
.badge::after { content: ""; position: absolute; right: -3px; top: -4px; width: 6px; height: 6px; border-radius: 50%; background: #ffa51f; }
.edit { width: 58px; padding-left: 10px; gap: 4px; font-weight: bold; font-size: 12.5px; letter-spacing: -.45px; color: #111; }
.edit svg { color: #15795a; }
.addtag { margin: 4px 11px 0 auto; width: 75px; height: 21px; border-radius: 3px; background: #f2f2f3; display: flex; align-items: center; gap: 8px; padding-left: 7px; font-size: 11px; letter-spacing: -.1px; color: #1f2023; -webkit-text-stroke: .2px #1f2023; }
.addtag svg { stroke-width: 1.3; }
.ranges { width: 484px; height: 28px; margin-top: 26px; border-radius: 4px; background: #f4f4f4; display: grid; grid-template-columns: 46px 45px 46px 46px 45px 54px 55px 55px 46px 1fr; align-items: center; }
.ranges span { height: 24px; display: flex; align-items: center; justify-content: center; }
.ranges .on { background: #fff; border-radius: 4px; color: #111; box-shadow: 0 1px 3px #0002; }
.ranges .pro { color: #8b8b8e; gap: 2px; letter-spacing: -.1px; }
.ranges .plus { padding-right: 2px; }
.ranges .custom { gap: 3px; padding-right: 4px; }
.pro svg { width: 8px; height: 8px; margin-top: 1px; fill: #ff8b17; color: #ff8b17; }
.plus svg { fill: #1f78ff; color: #1f78ff; }
.pro svg.sliders { width: 12px; height: 13px; fill: none; }
.widgets { display: grid; grid-template-columns: 325px 324px; gap: 7px 74px; width: 723px; margin: 17px 0 0 530px; }
.card { height: 174px; padding: 13px 11px 0 10px; background: #fff; border-radius: 4px; box-shadow: 0 1px 6px #0000001f; color: #222; }
.card h2 { margin: 0; font-size: 16px; font-weight: normal; line-height: 20px; letter-spacing: -.1px; }
.led { grid-column: 1 / 3; justify-self: center; width: 458px; height: 83px; padding-left: 11px; }
.toggle { display: flex; align-items: center; gap: 6px; height: 30px; margin-top: 7px; font-size: 27px; letter-spacing: -1.1px; }
.switch { width: 49px; height: 24px; border-radius: 12px; background: #6c6c6c; padding: 1px 2px; }
.switch::before { content: ""; display: block; width: 21px; height: 21px; border-radius: 50%; background: #fff; box-shadow: 0 1px 3px #0006; }
.gauge { width: 126px; margin: 3px auto 0; display: grid; grid-template-columns: 126px; justify-items: center; }
.gauge svg { width: 126px; height: 102px; grid-area: 1 / 1; }
.gauge path { fill: none; stroke-width: 12.5; stroke-linecap: round; }
.gauge .track { stroke: #e4e4e4; }
.gauge .temp { stroke: #e8202c; }
.gauge .hum { stroke: #0277e0; }
.gauge strong { grid-area: 1 / 1; padding-top: 51px; font-size: 24px; line-height: 28px; font-weight: normal; letter-spacing: 1px; color: #58585b; }
.limits { display: flex; justify-content: space-between; width: 111px; margin: 5px 0 0; font-size: 17px; line-height: 20px; }
.limits.wide { width: 112px; }
.legal { margin-top: auto; display: flex; justify-content: flex-end; padding-right: 1px; font-size: 11.5px; line-height: 14px; letter-spacing: -.22px; }
.legal a { margin-left: 7px; padding-left: 7px; border-left: 1px solid #e4e4e8; color: #6a87e2; -webkit-text-stroke: .2px #6a87e2; }

/* taskbar */
.taskbar { height: 60px; flex: none; background: #202020; border-top: 1px solid #3c3f3a; display: flex; align-items: center; padding-left: 503px; }
.search { width: 275px; height: 40px; margin-left: 16px; border: 1px solid #585858; border-radius: 20px; background: #404040; display: flex; align-items: center; padding-left: 14px; font-size: 16px; color: #d6d6d6; }
.search span { margin-left: 13px; letter-spacing: -.1px; }
.search .art { margin: 0 5px 0 auto; }
.apps { display: flex; gap: 5px; margin-left: 6px; }
.apps div { width: 50px; height: 50px; display: grid; justify-items: center; grid-template-rows: 30px 4px; row-gap: 5px; padding-top: 10px; border-radius: 5px; }
.apps svg { width: 30px; height: 30px; }
.apps .open::after { content: ""; width: 8px; height: 4px; border-radius: 2px; background: #9a9a9a; }
.apps .current { background: #2d2d2d; box-shadow: inset 0 0 0 1px #383838; }
.apps .current::after { width: 20px; background: #4cc2ff; }
.tray { margin-left: auto; display: flex; align-items: center; padding-right: 26px; }
.lang { width: 31px; margin: 0 20px 0 26px; font-size: 14.5px; letter-spacing: -.2px; }
.tray svg + svg { margin-left: 10px; }
.clock { width: 98px; margin-right: 10px; display: flex; flex-direction: column; align-items: flex-end; font-size: 14.5px; line-height: 20px; letter-spacing: 0; padding-bottom: 1px; }
```
